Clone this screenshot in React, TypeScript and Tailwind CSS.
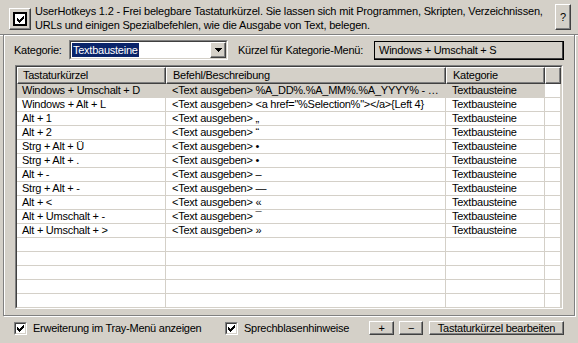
import type { ReactNode } from "react";

const rows: [string, string][] = [
  ["Windows + Umschalt + D", "<Text ausgeben> %A_DD%.%A_MM%.%A_YYYY% - %..."],
  ["Windows + Alt + L", '<Text ausgeben> <a href="%Selection%"></a>{Left 4}'],
  ["Alt + 1", "<Text ausgeben> „"],
  ["Alt + 2", "<Text ausgeben> “"],
  ["Strg + Alt + Ü", "<Text ausgeben> •"],
  ["Strg + Alt + .", "<Text ausgeben> •"],
  ["Alt + -", "<Text ausgeben> –"],
  ["Strg + Alt + -", "<Text ausgeben> —"],
  ["Alt + <", "<Text ausgeben> «"],
  ["Alt + Umschalt + -", "<Text ausgeben> ¯"],
  ["Alt + Umschalt + >", "<Text ausgeben> »"],
];

// classic 7x7 check mark
const CHECK = ["......X", ".....XX", "X...XXX", "XX.XXX.", "XXXXX..", ".XXX...", "..X...."];

function CheckGlyph() {
  return (
    <svg width="7" height="7" viewBox="0 0 7 7" shapeRendering="crispEdges">
      {CHECK.flatMap((r, y) =>
        r
          .split("")
          .map((c, x) =>
            c === "X" ? <rect key={`${x}-${y}`} x={x} y={y} width="1" height="1" fill="#000" /> : null,
          ),
      )}
    </svg>
  );
}

function Raised({ className = "", children }: { className?: string; children?: ReactNode }) {
  return (
    <div
      className={`flex items-center justify-center border border-t-white border-l-white border-r-[#404040] border-b-[#404040] bg-[#d4d0c8] shadow-[inset_-1px_-1px_0_#808080] ${className}`}
    >
      {children}
    </div>
  );
}

function Sunken({ className = "", children }: { className?: string; children?: ReactNode }) {
  return (
    <div className={`border border-t-[#808080] border-l-[#808080] border-r-white border-b-white ${className}`}>
      <div className="flex h-full w-full border border-t-[#404040] border-l-[#404040] border-r-[#d4d0c8] border-b-[#d4d0c8] bg-white">
        {children}
      </div>
    </div>
  );
}

function Checkbox({ label, className = "" }: { label: string; className?: string }) {
  return (
    <div className={`flex items-center ${className}`}>
      <Sunken className="h-[13px] w-[13px]">
        <div className="flex h-full w-full items-center justify-center">
          <CheckGlyph />
        </div>
      </Sunken>
      <span className="ml-[6px]">{label}</span>
    </div>
  );
}

const COLS = ["w-[149px] pl-[5px]", "w-[280px] pl-[6px]", "w-[99px] pl-[6px]", "w-[16px]"];

function ShortcutList() {
  const empty = Array.from({ length: 6 });
  return (
    <Sunken className="ml-[11px] mt-[5px] h-[244px] w-[548px]">
      <div className="flex w-full flex-col overflow-hidden">
        <div className="flex h-[17px] flex-none">
          {["Tastaturkürzel", "Befehl/Beschreibung", "Kategorie", ""].map((h, i) => (
            <Raised key={i} className={`h-full flex-none !justify-start ${COLS[i]}`}>
              {h}
            </Raised>
          ))}
        </div>
        {rows.map(([key, cmd], r) => (
          <div key={key} className="flex h-[14px] flex-none">
            {[key, cmd, "Textbausteine", ""].map((t, i) => (
              <div
                key={i}
                className={`flex-none truncate border-r border-b border-[#d4d0c8] leading-[13px] ${COLS[i]} ${
                  r === 0 && i < 3 ? "bg-[#d4d0c8]" : ""
                }`}
              >
                {t}
              </div>
            ))}
          </div>
        ))}
        {empty.map((_, r) => (
          <div key={r} className="flex h-[14px] flex-none">
            {COLS.map((c, i) => (
              <div key={i} className={`flex-none border-r border-b border-[#d4d0c8] ${c}`} />
            ))}
          </div>
        ))}
      </div>
    </Sunken>
  );
}

export default function App() {
  return (
    <div className="h-[343px] w-[578px] overflow-hidden bg-[#d4d0c8] font-['Liberation_Sans',Arial,sans-serif] text-[11px] tracking-[-0.25px] text-black">
      {/* header */}
      <div className="flex h-[34px] items-start">
        <Raised className="ml-[9px] mt-[8px] h-[22px] w-[22px] flex-none">
          <div className="flex h-[14px] w-[14px] items-center justify-center border-2 border-black bg-white">
            <CheckGlyph />
          </div>
        </Raised>
        <p className="ml-[4px] mt-[4px] w-[516px] flex-none whitespace-nowrap leading-[14px] tracking-[-0.18px]">
          UserHotkeys 1.2 - Frei belegbare Tastaturkürzel. Sie lassen sich mit Programmen, Skripten, Verzeichnissen,
          <br />
          URLs und einigen Spezialbefehlen, wie die Ausgabe von Text, belegen.
        </p>
        <Raised className="ml-auto mr-[7px] mt-[4px] h-[26px] w-[16px] flex-none">?</Raised>
      </div>

      {/* panel */}
      <div className="border-t border-[#808080] shadow-[inset_0_1px_0_#fff]">
        <div className="mx-[3px] h-[281px] border border-t-0 border-[#808080] shadow-[inset_1px_0_0_#fff,1px_1px_0_#fff] pt-[5px]">
          <div className="flex h-[20px] items-center">
            <span className="ml-[10px] w-[55px]">Kategorie:</span>
            <Sunken className="h-[20px] w-[159px]">
              <div className="flex h-full w-full items-center">
                <span className="ml-[1px] bg-[#0a246a] px-[1px] leading-[14px] text-white">Textbausteine</span>
                <Raised className="ml-auto h-[16px] w-[16px]">
                  <svg width="7" height="4" viewBox="0 0 7 4" shapeRendering="crispEdges">
                    <path d="M0 0h7v1H0zM1 1h5v1H1zM2 2h3v1H2zM3 3h1v1H3z" fill="#000" />
                  </svg>
                </Raised>
              </div>
            </Sunken>
            <span className="ml-[10px] w-[136px]">Kürzel für Kategorie-Menü:</span>
            <div className="flex h-[19px] w-[190px] items-center border border-black pl-[4px] shadow-[inset_-1px_-1px_0_#404040]">
              Windows + Umschalt + S
            </div>
          </div>
          <ShortcutList />
        </div>
      </div>

      {/* bottom bar */}
      <div className="mt-[5px] flex h-[14px] items-center">
        <Checkbox className="ml-[14px] w-[211px]" label="Erweiterung im Tray-Menü anzeigen" />
        <Checkbox className="w-[144px]" label="Sprechblasenhinweise" />
        <Raised className="h-[14px] w-[25px]">+</Raised>
        <Raised className="ml-[5px] h-[14px] w-[24px]">−</Raised>
        <Raised className="ml-[6px] h-[14px] w-[135px]">Tastaturkürzel bearbeiten</Raised>
      </div>
    </div>
  );
}
